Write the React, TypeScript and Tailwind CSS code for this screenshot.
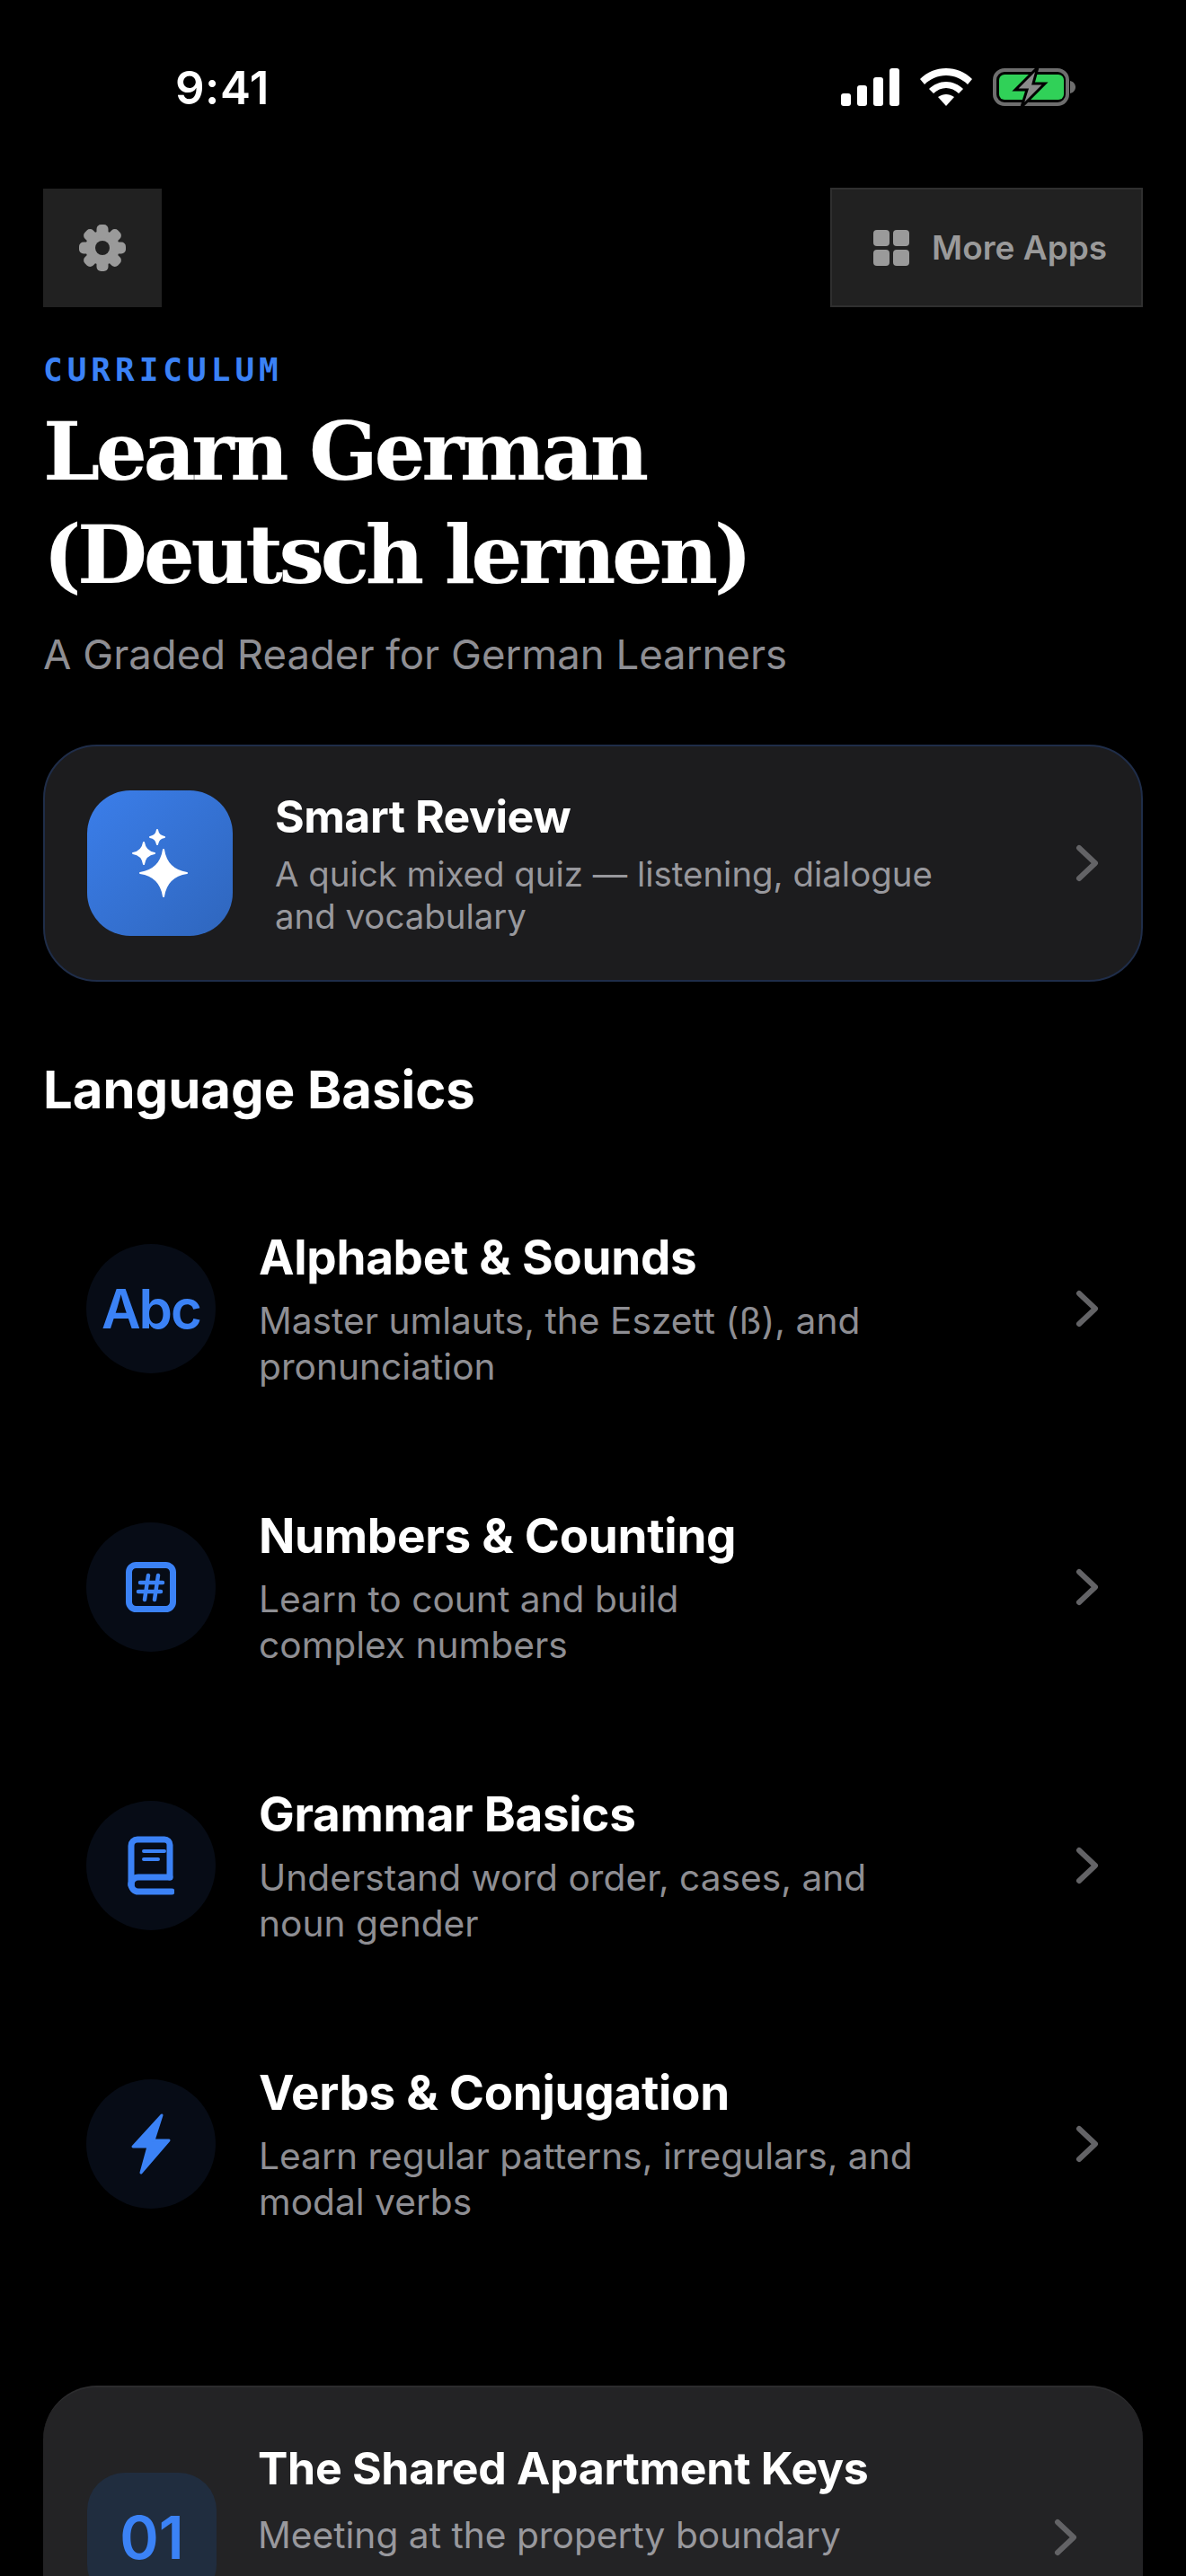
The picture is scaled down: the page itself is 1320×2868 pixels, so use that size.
import React from 'react';

const inter = { fontFamily: 'Inter, sans-serif' };

const star = (cx: number, cy: number, r: number) => {
  const k = r * 0.13;
  return `M${cx} ${cy - r}Q${cx + k} ${cy - k} ${cx + r} ${cy}Q${cx + k} ${cy + k} ${cx} ${cy + r}Q${cx - k} ${cy + k} ${cx - r} ${cy}Q${cx - k} ${cy - k} ${cx} ${cy - r}Z`;
};

const AlphabetIcon = () => (
  <span className="text-[60px] font-semibold leading-none tracking-[-2px] text-[#3b82f6]">Abc</span>
);

const HashIcon = () => (
  <svg width="56" height="56" viewBox="0 0 56 56" fill="none" stroke="#3b82f6">
    <rect x="3.5" y="3.5" width="49" height="49" rx="8" strokeWidth="7" />
    <path d="M25 15l-4 27M36 15l-4 27M16 23h25M14 33h25" strokeWidth="4.5" strokeLinecap="round" />
  </svg>
);

const BookIcon = () => (
  <svg width="52" height="66" viewBox="0 0 52 66" fill="none" stroke="#3b82f6" strokeWidth="7" strokeLinejoin="round" strokeLinecap="round">
    <path d="M47 46V10a6 6 0 0 0-6-6H11a7 7 0 0 0-7 7v44" />
    <path d="M4 54a8 8 0 0 1 8-8h35" />
    <path d="M4 54a8 8 0 0 0 8 8h37" />
    <path d="M18 17h23M18 26h16" strokeWidth="4" />
  </svg>
);

const BoltIcon = () => (
  <svg width="46" height="70" viewBox="0 0 46 70" fill="#3b82f6" stroke="#3b82f6" strokeWidth="3" strokeLinejoin="round">
    <path d="M35 3L3 38H20L12 67L43 31H26Z" />
  </svg>
);

const SparkleIcon = () => (
  <svg width="64" height="78" viewBox="0 0 64 78" fill="#fff" stroke="#fff" strokeWidth="2" strokeLinejoin="round">
    <path d={star(36, 50, 26)} />
    <path d={star(14, 28, 12)} />
    <path d={star(29, 10, 8)} />
  </svg>
);

const GearIcon = () => (
  <svg width="54" height="54" viewBox="0 0 54 54">
    <circle cx="27" cy="27" r="19" fill="#9a9a9a" />
    {[0, 45, 90, 135, 180, 225, 270, 315].map((a) => (
      <rect key={a} x="20.5" y="1" width="13" height="16" rx="5" fill="#9a9a9a" transform={`rotate(${a} 27 27)`} />
    ))}
    <circle cx="27" cy="27" r="8" fill="#212121" />
  </svg>
);

const lessons = [
  { title: 'Alphabet & Sounds', lines: ['Master umlauts, the Eszett (ß), and', 'pronunciation'], icon: <AlphabetIcon /> },
  { title: 'Numbers & Counting', lines: ['Learn to count and build', 'complex numbers'], icon: <HashIcon /> },
  { title: 'Grammar Basics', lines: ['Understand word order, cases, and', 'noun gender'], icon: <BookIcon /> },
  { title: 'Verbs & Conjugation', lines: ['Learn regular patterns, irregulars, and', 'modal verbs'], icon: <BoltIcon /> },
];

const StatusBar = () => (
  <div className="flex h-[194px] items-center justify-between pl-[195px] pr-[123px] text-white">
    <span className="text-[51px] font-semibold leading-none tracking-[0.5px]">9:41</span>
    <div className="flex items-center gap-[23px]">
      <svg width="65" height="42" viewBox="0 0 65 42" fill="#fff">
        <rect x="0" y="28" width="11" height="14" rx="3" />
        <rect x="18" y="19" width="11" height="23" rx="3" />
        <rect x="36" y="10" width="11" height="32" rx="3" />
        <rect x="54" y="0" width="11" height="42" rx="3" />
      </svg>
      <svg width="58" height="42" viewBox="0 0 58 42" fill="#fff">
        <path d="M29 0c11 0 21 4 29 12l-5 6C47 12 38 8 29 8S11 12 5 18l-5-6C8 4 18 0 29 0z" />
        <path d="M29 15c7 0 14 3 19 8l-5 5c-4-4-9-6-14-6s-10 2-14 6l-5-5c5-5 12-8 19-8z" />
        <path d="M29 29c3 0 6 1 9 3L29 42 20 32c3-2 6-3 9-3z" />
      </svg>
      <svg width="92" height="44" viewBox="0 0 92 44" fill="none">
        <rect x="2" y="3" width="81" height="38" rx="11" stroke="#6e6e6e" strokeWidth="4" />
        <rect x="7" y="8" width="72" height="28" rx="6" fill="#30d158" />
        <path d="M86 15c4 1 6 4 6 7s-2 6-6 7z" fill="#6e6e6e" />
        <path d="M50 0L25 25h13l-6 19 26-26H45z" fill="#8a8a8a" stroke="#000" strokeWidth="3" />
      </svg>
    </div>
  </div>
);

const Chevron = () => (
  <svg width="26" height="42" viewBox="0 0 26 42" fill="none" stroke="#636366" strokeWidth="6" strokeLinecap="round" strokeLinejoin="round" className="shrink-0">
    <path d="M4 4l18 17L4 38" />
  </svg>
);

export default function App() {
  return (
    <div className="h-[2868px] w-[1320px] overflow-hidden bg-black" style={inter}>
      <StatusBar />

      <div className="px-[48px]">
        <div className="mt-[15px] flex items-center justify-between">
          <button className="flex h-[132px] w-[132px] items-center justify-center bg-[#212121]">
            <GearIcon />
          </button>
          <button className="flex h-[133px] w-[348px] items-center gap-[25px] border-2 border-[#2f2f2f] bg-[#212121] pl-[46px]">
            <svg width="40" height="40" viewBox="0 0 40 40" fill="#9a9a9a">
              <rect x="0" y="0" width="18" height="18" rx="4" />
              <rect x="22" y="0" width="18" height="18" rx="4" />
              <rect x="0" y="22" width="18" height="18" rx="4" />
              <rect x="22" y="22" width="18" height="18" rx="4" />
            </svg>
            <span className="text-[37px] font-semibold text-[#9a9a9a]">More Apps</span>
          </button>
        </div>

        <div className="mt-[50px] text-[36px] font-bold leading-[40px] tracking-[5px] text-[#3b82f6]" style={{ fontFamily: '"DejaVu Sans Mono", monospace' }}>
          CURRICULUM
        </div>
        <h1 className="mt-[13px] text-[90px] font-bold leading-[115px] tracking-[-4.5px] text-white" style={{ fontFamily: '"DejaVu Serif", serif' }}>
          Learn German
          <br />
          (Deutsch lernen)
        </h1>
        <p className="mt-[27px] text-[45.5px] leading-[54px] text-[#8e8e93]">A Graded Reader for German Learners</p>

        <div className="mt-[73px] flex h-[264px] items-center rounded-[60px] border-2 border-[#1f2d49] bg-[#1c1c1e] pl-[47px] pr-[47px]">
          <div className="flex h-[162px] w-[162px] shrink-0 items-center justify-center rounded-[48px] bg-gradient-to-br from-[#3b7eea] to-[#2f66bd]">
            <SparkleIcon />
          </div>
          <div className="ml-[47px] flex-1">
            <div className="text-[50px] font-bold leading-[60px] tracking-[-0.5px] text-white">Smart Review</div>
            <div className="mt-[11px] text-[38.4px] leading-[47px] text-[#98989d]">
              A quick mixed quiz — listening, dialogue
              <br />
              and vocabulary
            </div>
          </div>
          <Chevron />
        </div>

        <h2 className="mt-[85px] text-[58px] font-bold leading-[70px] text-white">Language Basics</h2>

        <div className="mt-[54px]">
          {lessons.map((l) => (
            <div key={l.title} className="flex h-[310px] items-center pl-[48px] pr-[49px]">
              <div className="flex h-[144px] w-[144px] shrink-0 items-center justify-center rounded-full bg-[#070c16]">{l.icon}</div>
              <div className="ml-[48px] flex-1">
                <div className="text-[53px] font-bold leading-[64px] tracking-[-0.3px] text-white">{l.title}</div>
                <div className="mt-[13px] text-[40.7px] leading-[51px] text-[#8e8e93]">
                  {l.lines[0]}
                  <br />
                  {l.lines[1]}
                </div>
              </div>
              <Chevron />
            </div>
          ))}
        </div>

        <div className="mt-[114px] flex h-[336px] items-center rounded-[60px] border-t-2 border-[#2c2c2e] bg-[#232325] pl-[49px] pr-[73px]">
          <div className="flex h-[144px] w-[144px] shrink-0 items-center justify-center rounded-[42px] bg-[#202d3f] text-[66px] font-semibold text-[#3b82f6]">
            01
          </div>
          <div className="ml-[46px] flex-1 self-start pt-[60px]">
            <div className="text-[50px] font-bold leading-[60px] tracking-[-0.3px] text-white">The Shared Apartment Keys</div>
            <div className="mt-[19px] text-[40.7px] leading-[51px] text-[#98989d]">Meeting at the property boundary</div>
          </div>
          <Chevron />
        </div>
      </div>
    </div>
  );
}
